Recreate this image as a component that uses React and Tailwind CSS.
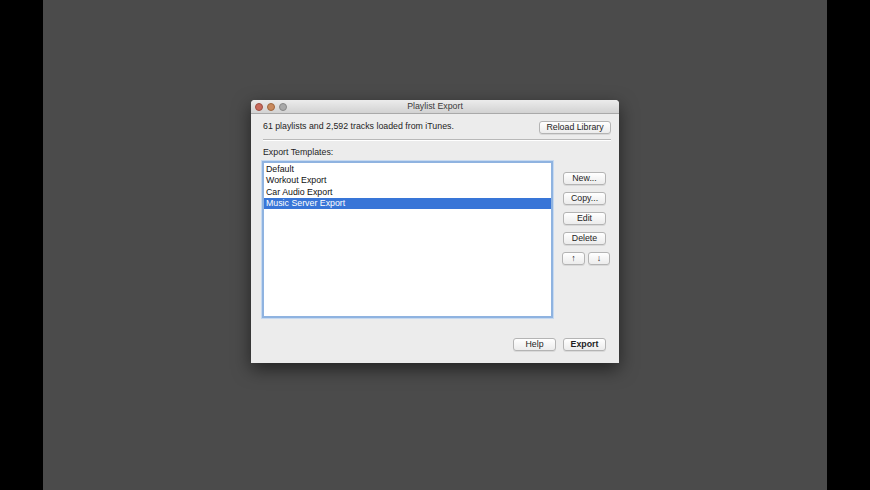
import React from "react";

// --- small aqua-ish push button ---
function PushButton({ children, className = "" }) {
  return (
    <div
      className={`flex items-center justify-center h-[13px] rounded-[3px] border border-[#b4b4b4] bg-gradient-to-b from-[#ffffff] to-[#ececec] shadow-[0_1px_0_rgba(0,0,0,0.08)] text-[8.8px] leading-none text-[#1e1e1e] ${className}`}
    >
      {children}
    </div>
  );
}

function TitleBar() {
  return (
    <div className="relative flex items-center h-[14px] rounded-t-[4px] bg-gradient-to-b from-[#ececec] to-[#d2d2d2] border-b border-[#a9a9a9]">
      <div className="flex items-center gap-[4px] pl-[4px]">
        <span className="w-[8px] h-[8px] rounded-full bg-[#c96a5c] border border-[#9e4e42]" />
        <span className="w-[8px] h-[8px] rounded-full bg-[#c98a5e] border border-[#a0683f]" />
        <span className="w-[8px] h-[8px] rounded-full bg-[#a9a9a9] border border-[#888888]" />
      </div>
      <div className="absolute inset-0 flex items-center justify-center text-[8.8px] text-[#3c3c3c]">
        Playlist Export
      </div>
    </div>
  );
}

const templates = ["Default", "Workout Export", "Car Audio Export", "Music Server Export"];

export default function App() {
  const selected = 3;

  return (
    <div
      className="flex w-[870px] h-[490px] bg-black"
      style={{ fontFamily: '"Liberation Sans", "DejaVu Sans", sans-serif' }}
    >
      <div className="w-[43px]" />
      <div className="w-[784px] h-full bg-[#4b4b4b] pt-[100px] pl-[208px]">
        <div className="w-[368px] h-[263px] flex flex-col bg-[#ececec] rounded-t-[4px] shadow-[0_6px_18px_rgba(0,0,0,0.55)]">
          <TitleBar />

          <div className="flex flex-col pr-[8px] pl-[12px]">
            {/* status row */}
            <div className="flex items-center justify-between h-[25px] pt-[1px]">
              <span className="text-[8.8px] text-[#1e1e1e]">
                61 playlists and 2,592 tracks loaded from iTunes.
              </span>
              <PushButton className="w-[72px]">Reload Library</PushButton>
            </div>
            <div className="h-[2px] bg-[#b8b8b8] border-b border-white" />

            <div className="pt-[5px] text-[8.8px] text-[#1e1e1e]">Export Templates:</div>

            <div className="flex mt-[2px] -ml-[1px]">
              {/* list */}
              <div className="w-[291px] h-[157px] bg-white border-2 border-[#8fb3e0] shadow-[0_0_0_1px_#c6d9f0]">
                <div className="flex flex-col">
                  {templates.map((t, i) => (
                    <div
                      key={t}
                      className={`h-[11.5px] flex items-center pl-[2px] text-[8.8px] leading-none ${
                        i === selected ? "bg-[#3875d7] text-white" : "text-[#111]"
                      }`}
                    >
                      {t}
                    </div>
                  ))}
                </div>
              </div>

              {/* side buttons */}
              <div className="flex flex-col pl-[9px] pt-[11px] gap-[7px]">
                <PushButton className="w-[43px] ml-[1px]">New...</PushButton>
                <PushButton className="w-[43px] ml-[1px]">Copy...</PushButton>
                <PushButton className="w-[43px] ml-[1px]">Edit</PushButton>
                <PushButton className="w-[43px] ml-[1px]">Delete</PushButton>
                <div className="flex gap-[3px]">
                  <PushButton className="w-[23px] text-[9px]">↑</PushButton>
                  <PushButton className="w-[22px] text-[9px]">↓</PushButton>
                </div>
              </div>
            </div>

            {/* bottom buttons */}
            <div className="flex justify-end gap-[7px] pt-[20px] pr-[5px]">
              <PushButton className="w-[43px]">Help</PushButton>
              <PushButton className="w-[43px] font-bold">Export</PushButton>
            </div>
          </div>
        </div>
      </div>
      <div className="w-[43px]" />
    </div>
  );
}
